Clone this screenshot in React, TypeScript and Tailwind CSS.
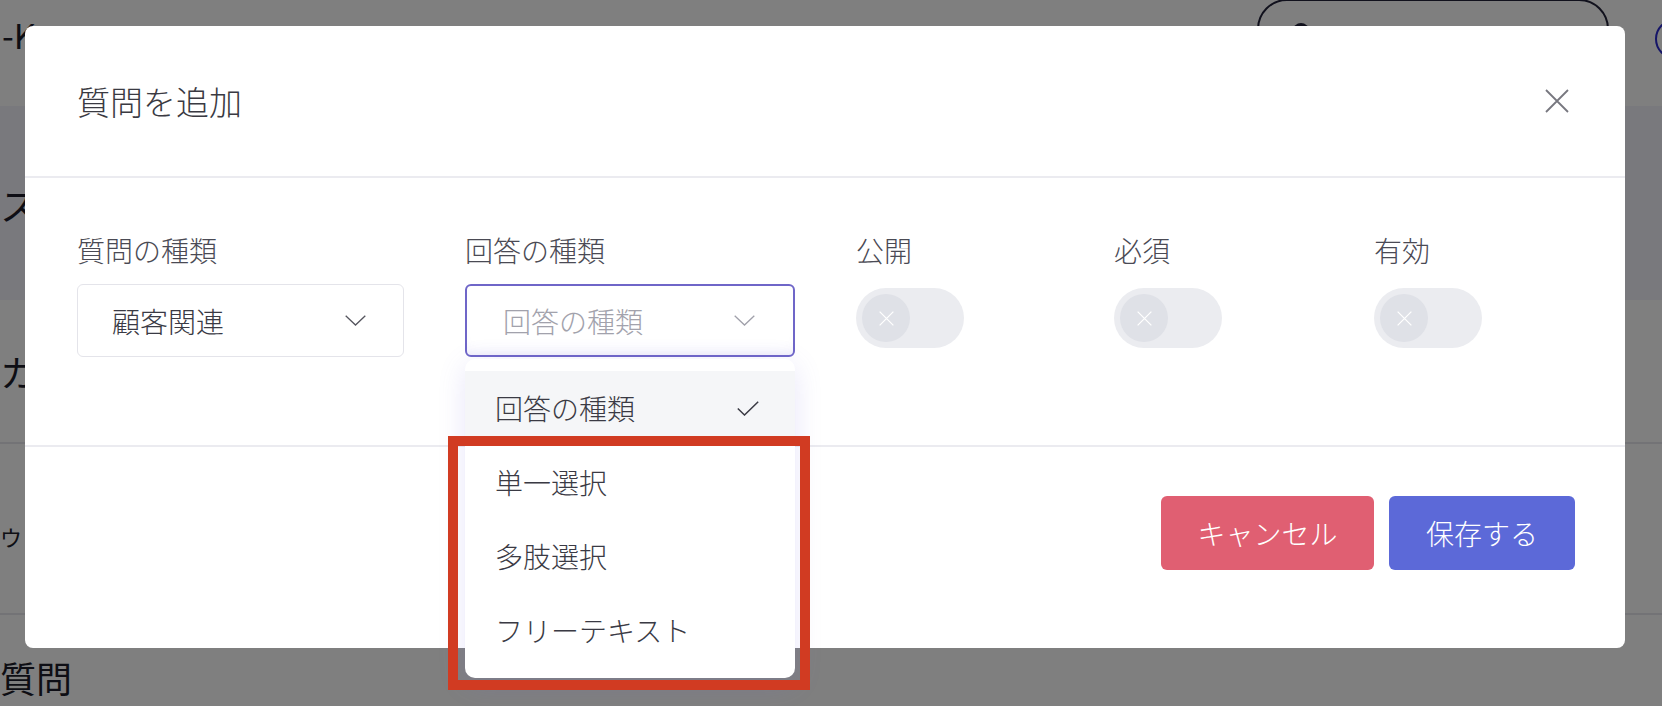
const answerTypes = ['回答の種類', '単一選択', '多肢選択', 'フリーテキスト'];

const Chevron = ({ className }: { className: string }) => (
  <svg width="21" height="11" viewBox="0 0 21 11" fill="none" className={className}>
    <path d="M0.7 0.7 L10.5 10 L20.3 0.7" stroke="currentColor" strokeWidth="1.3" />
  </svg>
);

const Cross = ({ size, stroke, className }: { size: number; stroke: number; className: string }) => (
  <svg width={size} height={size} viewBox="0 0 24 24" fill="none" className={className}>
    <path d="M1 1 L23 23 M23 1 L1 23" stroke="currentColor" strokeWidth={stroke} />
  </svg>
);

const Toggle = () => (
  <div className="flex h-[60px] w-[108px] items-center rounded-full bg-[#ebecf0] pl-[6px]">
    <div className="flex h-[48px] w-[48px] items-center justify-center rounded-full bg-[#dfe1e7]">
      <Cross size={15} stroke={2} className="text-white" />
    </div>
  </div>
);

const Label = ({ children }: { children: string }) => (
  <p className="text-[28px] leading-[40px] text-[#4a4a54]">{children}</p>
);

export default function App() {
  return (
    <div className="relative h-[706px] w-[1662px] overflow-hidden bg-white font-['Noto_Sans_CJK_JP','Noto_Sans',sans-serif] font-light">
      {/* page behind the dialog */}
      <div className="flex h-full flex-col font-normal text-[#1c1c2a]">
        <div className="flex h-[106px] items-start justify-between">
          <span className="ml-[2px] mt-[12px] text-[34px] leading-[46px]">-K</span>
          <div className="-mr-[33px] -mt-[1px] flex items-start gap-[46px]">
            <div className="flex h-[60px] w-[352px] items-start rounded-[30px] border-2 border-[#23233a] pl-[34px] pt-[22px]">
              <span className="h-[16px] w-[16px] rounded-full bg-[#23233a]" />
            </div>
            <span className="mt-[20px] h-[40px] w-[40px] rounded-full border-2 border-[#2a2ad0]" />
          </div>
        </div>
        <div className="flex h-[194px] items-center bg-[#f2f2fa]">
          <span className="text-[38px]">ス</span>
        </div>
        <div className="flex h-[144px] items-center border-b-2 border-[#e6e6ec]">
          <span className="text-[36px]">カス</span>
        </div>
        <div className="flex h-[171px] items-center border-b-2 border-[#e6e6ec] pt-[16px]">
          <span className="text-[22px]">ウォ</span>
        </div>
        <div className="pt-[40px]">
          <span className="text-[36px] leading-[44px]">質問</span>
        </div>
      </div>

      <div className="absolute inset-0 bg-black/50" />

      {/* dialog */}
      <div className="absolute left-[25px] top-[26px] flex h-[622px] w-[1600px] flex-col rounded-[8px] bg-white">
        <div className="flex h-[152px] items-center justify-between border-b-2 border-[#ebebf0] pl-[52px] pr-[56px]">
          <h2 className="text-[33px] leading-[44px] text-[#3a3a42]">質問を追加</h2>
          <Cross size={24} stroke={1.8} className="text-[#77777f]" />
        </div>

        <div className="flex pb-[88px] pl-[52px] pt-[52px]">
          <div className="w-[388px]">
            <Label>質問の種類</Label>
            <div className="mt-[14px] flex h-[73px] w-[327px] items-center justify-between rounded-[6px] border border-[#e4e4ea] pl-[34px] pr-[37px]">
              <span className="text-[28px] text-[#3a3a44]">顧客関連</span>
              <Chevron className="text-[#55555e]" />
            </div>
          </div>

          <div className="w-[391px]">
            <Label>回答の種類</Label>
            <div className="relative mt-[14px] w-[330px]">
              <div className="flex h-[73px] items-center justify-between rounded-[6px] border-2 border-[#6f66c8] pl-[36px] pr-[38px] shadow-[inset_0_-10px_14px_-10px_rgba(120,110,220,0.18)]">
                <span className="text-[28px] text-[#a2a2ac]">回答の種類</span>
                <Chevron className="text-[#a0a0aa]" />
              </div>

              <div className="absolute left-0 top-[75px] z-10 w-[330px] rounded-[10px] bg-white pb-[11px] pt-[12px] shadow-[0_6px_28px_rgba(110,100,220,0.16)]">
                {answerTypes.map((t, i) => (
                  <div
                    key={t}
                    className={`flex h-[74px] items-center justify-between pl-[30px] pr-[36px] text-[28px] text-[#3a3a44] ${i === 0 ? 'bg-[#f5f6f8]' : ''}`}
                  >
                    <span>{t}</span>
                    {i === 0 && (
                      <svg width="22" height="15" viewBox="0 0 22 15" fill="none" className="text-[#3a3a44]">
                        <path d="M0.8 7.5 L7.5 14 L21.2 0.8" stroke="currentColor" strokeWidth="1.5" />
                      </svg>
                    )}
                  </div>
                ))}
                <div className="absolute left-[-17px] top-[77px] h-[254px] w-[362px] border-[10px] border-[#d13b22]" />
              </div>
            </div>
          </div>

          <div className="w-[258px]">
            <Label>公開</Label>
            <div className="mt-[18px]">
              <Toggle />
            </div>
          </div>
          <div className="w-[260px]">
            <Label>必須</Label>
            <div className="mt-[18px]">
              <Toggle />
            </div>
          </div>
          <div>
            <Label>有効</Label>
            <div className="mt-[18px]">
              <Toggle />
            </div>
          </div>
        </div>

        <div className="flex flex-1 items-start justify-end gap-[15px] border-t-2 border-[#ebebf0] pr-[50px] pt-[49px]">
          <button className="flex h-[74px] w-[213px] items-center justify-center rounded-[6px] bg-[#e05f72] text-[28px] text-white">
            キャンセル
          </button>
          <button className="flex h-[74px] w-[186px] items-center justify-center rounded-[6px] bg-[#5c69d8] text-[28px] text-white">
            保存する
          </button>
        </div>
      </div>
    </div>
  );
}
